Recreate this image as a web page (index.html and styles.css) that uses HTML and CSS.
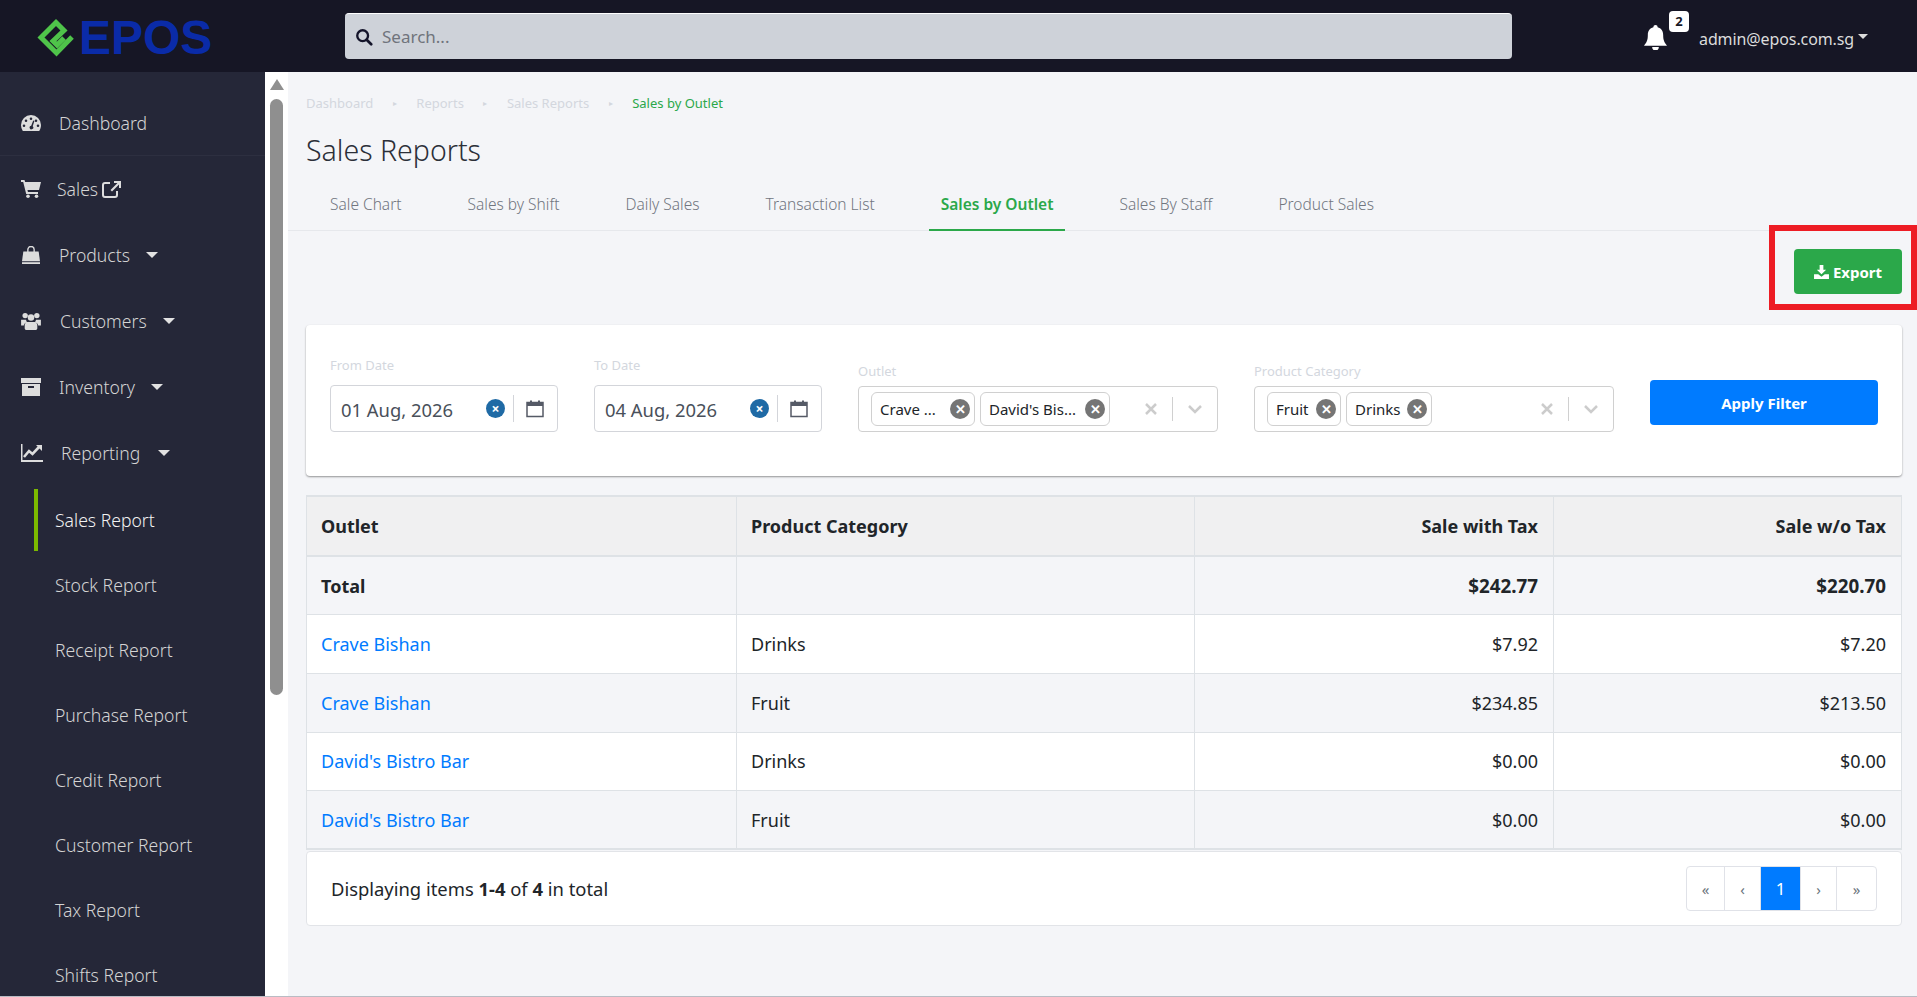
FILE: index.html
```html
<!DOCTYPE html>
<html lang="en">
<head>
    <meta charset="UTF-8">
    <meta name="viewport" content="width=device-width, initial-scale=1.0">
    <title>Sales by Outlet</title>
    <link rel="stylesheet" href="styles.css">
</head>
<body>
    <header class="topbar">
        <div class="logo">
            <svg class="logo-mark" viewBox="0 0 39 39"><path d="M35 19 L19.500 35 L4 19.500 L19 4.500 L27 12.500 L16 23 L20 27 L27 20" fill="none" stroke="#4fc44a" stroke-width="5"/></svg>
            <span class="logo-text">EPOS</span>
        </div>
        <div class="search">
            <svg class="search-icon" viewBox="0 0 20 20"><circle cx="8.500" cy="8.500" r="6" fill="none" stroke="#14142a" stroke-width="2.600"/><path d="M13 13l5 5" stroke="#14142a" stroke-width="3" stroke-linecap="round"/></svg>
            <span>Search...</span>
        </div>
        <div class="user-area">
            <svg class="bell" viewBox="0 0 24 26"><path d="M12 0a2.200 2.200 0 0 1 2.200 2.400C18 3.400 20 6.500 20 10.500c0 6 1.500 8 4 11H0c2.500-3 4-5 4-11C4 6.500 6 3.400 9.800 2.400A2.200 2.200 0 0 1 12 0zM8.500 23h7a3.500 3.500 0 0 1-7 0z" fill="#fff"/></svg>
            <span class="badge">2</span>
            <span class="user-name">admin@epos.com.sg</span>
            <span class="user-caret"></span>
        </div>
    </header>

    <div class="layout">
        <nav class="sidebar">
            <a class="nav-item nav-first">
                <svg class="nav-icon" viewBox="0 0 20 16"><path fill-rule="evenodd" d="M10 0a10 10 0 0 1 10 10c0 2.300-.7 4.300-1.800 6H1.800A10.500 10.500 0 0 1 0 10 10 10 0 0 1 10 0zM10 2.500a1.300 1.300 0 1 0 0 2.600 1.300 1.300 0 0 0 0-2.600zM5 4.500a1.300 1.300 0 1 0 0 2.600 1.300 1.300 0 0 0 0-2.600zM15 4.500a1.300 1.300 0 1 0 0 2.600 1.300 1.300 0 0 0 0-2.600zM3 9.500a1.300 1.300 0 1 0 0 2.600 1.300 1.300 0 0 0 0-2.600zM17 9.500a1.300 1.300 0 1 0 0 2.600 1.300 1.300 0 0 0 0-2.600zM12.200 5.500l-2 5.300a1.800 1.800 0 1 0 1.500.5l1.700-5.400z"/></svg>
                <span>Dashboard</span>
            </a>
            <a class="nav-item nav-tight">
                <svg class="nav-icon" viewBox="0 0 20 18"><path d="M0 0h3.500l.6 2H20l-2 8H6.500l.4 2H17v2H5.200L2.200 2H0z"/><circle cx="7" cy="16.200" r="1.800"/><circle cx="15.500" cy="16.200" r="1.800"/></svg>
                <span>Sales</span>
                <svg class="ext-icon" viewBox="0 0 20 18"><path d="M12 1h7v7h-2V4.500l-7 7L8.500 10l7-7H12z" fill="#ddd"/><path d="M8 3H3a2 2 0 0 0-2 2v10a2 2 0 0 0 2 2h10a2 2 0 0 0 2-2v-4" fill="none" stroke="#ddd" stroke-width="2"/></svg>
            </a>
            <a class="nav-item">
                <svg class="nav-icon" viewBox="0 0 20 20"><path d="M6.500 7V4a3.500 3.500 0 0 1 7 0v3" fill="none" stroke="#ddd" stroke-width="1.500"/><path d="M1.500 6h17l1.500 11H0z"/><path d="M0 18h20v2H0z"/></svg>
                <span>Products</span>
                <span class="caret"></span>
            </a>
            <a class="nav-item nav-wide">
                <svg class="nav-icon" viewBox="0 0 22 20"><circle cx="4.500" cy="4" r="3"/><circle cx="17.500" cy="4" r="3"/><circle cx="11" cy="6" r="3.600"/><path d="M0 8.500h5.500a5 5 0 0 0 1 2.500C4 12 3 14 3 15H0zM22 8.500h-5.500a5 5 0 0 1-1 2.500c2.500 1 3.500 3 3.500 4h3zM7 11h8c2 0 3 2 3 4v3c0 1-1 2-2 2H6c-1 0-2-1-2-2v-3c0-2 1-4 3-4z"/></svg>
                <span>Customers</span>
                <span class="caret"></span>
            </a>
            <a class="nav-item">
                <svg class="nav-icon" viewBox="0 0 20 18"><path fill-rule="evenodd" d="M0 0h20v5H0zM1 6h18v12H1zM7 8v2h6V8z"/></svg>
                <span>Inventory</span>
                <span class="caret"></span>
            </a>
            <a class="nav-item nav-wider">
                <svg class="nav-icon" viewBox="0 0 22 18"><path d="M0 0h1.500v16H22v2H0z"/><path d="M3 13l5-6 3.500 3L19 2" fill="none" stroke="#ddd" stroke-width="2.600"/><path d="M15 1h6v6z"/></svg>
                <span>Reporting</span>
                <span class="caret"></span>
            </a>
            <a class="sub-item sub-active">Sales Report</a>
            <a class="sub-item">Stock Report</a>
            <a class="sub-item">Receipt Report</a>
            <a class="sub-item">Purchase Report</a>
            <a class="sub-item">Credit Report</a>
            <a class="sub-item">Customer Report</a>
            <a class="sub-item">Tax Report</a>
            <a class="sub-item">Shifts Report</a>
        </nav>

        <div class="scroll-track">
            <div class="scroll-arrow"></div>
            <div class="scroll-thumb"></div>
        </div>

        <main class="content">
            <div class="breadcrumb">
                <span>Dashboard</span><i>▸</i>
                <span>Reports</span><i>▸</i>
                <span>Sales Reports</span><i>▸</i>
                <span class="crumb-current">Sales by Outlet</span>
            </div>
            <h1>Sales Reports</h1>
            <div class="tabs">
                <a class="tab">Sale Chart</a>
                <a class="tab">Sales by Shift</a>
                <a class="tab">Daily Sales</a>
                <a class="tab">Transaction List</a>
                <a class="tab tab-active">Sales by Outlet</a>
                <a class="tab">Sales By Staff</a>
                <a class="tab">Product Sales</a>
            </div>

            <div class="page-body">
                <div class="actions">
                    <button class="btn-export">
                        <svg viewBox="0 0 16 15"><path d="M6 0h4v5h3L8 10 3 5h3z" fill="#fff"/><path d="M0 10h4.500L8 12.500 11.500 10H16v5H0z" fill="#fff"/></svg>
                        Export
                    </button>
                </div>

                <section class="filter-card">
                    <div class="field field-date">
                        <label>From Date</label>
                        <div class="date-input">
                            <span class="date-value">01 Aug, 2026</span>
                            <span class="date-clear">×</span>
                            <span class="sep"></span>
                            <svg class="cal" viewBox="0 0 18 18"><path d="M1 3h16v14H1z" fill="#fff" stroke="#555a66" stroke-width="1.500"/><path d="M1 3h16v3.500H1z" fill="#555a66"/><path d="M5 1v4M13 1v4" stroke="#555a66" stroke-width="2"/></svg>
                        </div>
                    </div>
                    <div class="field field-date">
                        <label>To Date</label>
                        <div class="date-input">
                            <span class="date-value">04 Aug, 2026</span>
                            <span class="date-clear">×</span>
                            <span class="sep"></span>
                            <svg class="cal" viewBox="0 0 18 18"><path d="M1 3h16v14H1z" fill="#fff" stroke="#555a66" stroke-width="1.500"/><path d="M1 3h16v3.500H1z" fill="#555a66"/><path d="M5 1v4M13 1v4" stroke="#555a66" stroke-width="2"/></svg>
                        </div>
                    </div>
                    <div class="field field-select">
                        <label>Outlet</label>
                        <div class="multi-select">
                            <span class="chip chip-crave">Crave ...<b class="chip-x">✕</b></span>
                            <span class="chip chip-david">David's Bis...<b class="chip-x">✕</b></span>
                            <svg class="select-clear" viewBox="0 0 12 12"><path d="M1 1l10 10M11 1L1 11" stroke="#ccc" stroke-width="2.500"/></svg>
                            <span class="sep sep-select"></span>
                            <svg class="select-arrow" viewBox="0 0 14 9"><path d="M1 1l6 6 6-6" fill="none" stroke="#ccc" stroke-width="2.500"/></svg>
                        </div>
                    </div>
                    <div class="field field-select">
                        <label>Product Category</label>
                        <div class="multi-select">
                            <span class="chip chip-fruit">Fruit<b class="chip-x">✕</b></span>
                            <span class="chip chip-drinks">Drinks<b class="chip-x">✕</b></span>
                            <svg class="select-clear" viewBox="0 0 12 12"><path d="M1 1l10 10M11 1L1 11" stroke="#ccc" stroke-width="2.500"/></svg>
                            <span class="sep sep-select"></span>
                            <svg class="select-arrow" viewBox="0 0 14 9"><path d="M1 1l6 6 6-6" fill="none" stroke="#ccc" stroke-width="2.500"/></svg>
                        </div>
                    </div>
                    <button class="btn-apply">Apply Filter</button>
                </section>

                <table class="report">
                    <colgroup>
                        <col class="col-outlet"><col class="col-cat"><col class="col-tax"><col class="col-notax">
                    </colgroup>
                    <thead>
                        <tr><th>Outlet</th><th>Product Category</th><th class="num">Sale with Tax</th><th class="num">Sale w/o Tax</th></tr>
                    </thead>
                    <tbody>
                        <tr class="row-total"><td>Total</td><td></td><td class="num">$242.77</td><td class="num">$220.70</td></tr>
                        <tr class="row-odd"><td><a>Crave Bishan</a></td><td>Drinks</td><td class="num">$7.92</td><td class="num">$7.20</td></tr>
                        <tr><td><a>Crave Bishan</a></td><td>Fruit</td><td class="num">$234.85</td><td class="num">$213.50</td></tr>
                        <tr class="row-odd"><td><a>David's Bistro Bar</a></td><td>Drinks</td><td class="num">$0.00</td><td class="num">$0.00</td></tr>
                        <tr><td><a>David's Bistro Bar</a></td><td>Fruit</td><td class="num">$0.00</td><td class="num">$0.00</td></tr>
                    </tbody>
                </table>

                <div class="table-footer">
                    <span>Displaying items <b>1-4</b> of <b>4</b> in total</span>
                    <div class="pager">
                        <a class="page-first">«</a>
                        <a class="page-prev">‹</a>
                        <a class="page-current">1</a>
                        <a class="page-next">›</a>
                        <a class="page-last">»</a>
                    </div>
                </div>
            </div>
        </main>
    </div>

    <div class="annotation"></div>
</body>
</html>
```

FILE: styles.css
```css
* {
    box-sizing: border-box;
}
html, body {
    height: 997px;
    margin: 0;
    overflow: hidden;
}
body {
    position: relative;
    font-family: "Noto Sans", "Open Sans", sans-serif;
    color: #212529;
    background-color: #f4f5f8;
    border-bottom: 1px solid #b9bcc4;
}
a {
    text-decoration: none;
}

/* top bar */
.topbar {
    display: flex;
    align-items: center;
    height: 72px;
    background-color: #161625;
}
.logo {
    display: flex;
    align-items: center;
    width: 345px;
    padding: 3px 0 0 37px;
}
.logo-mark {
    width: 39px;
    height: 39px;
}
.logo-text {
    margin-left: 3px;
    font-family: "Liberation Sans", sans-serif;
    font-size: 48px;
    line-height: 48px;
    font-weight: 700;
    color: #0a2ba8;
}
.search {
    display: flex;
    align-items: center;
    width: 1167px;
    height: 46px;
    padding-left: 10px;
    background-color: #ced2d9;
    border-top: 1px solid #fff;
    border-radius: 4px;
    font-size: 17px;
    color: #70747c;
}
.search-icon {
    width: 18px;
    height: 18px;
    margin-right: 9px;
}
.user-area {
    display: flex;
    align-items: center;
    position: relative;
    flex: 1;
    padding-left: 132px;
    color: #dcdcdc;
}
.bell {
    width: 23px;
    height: 25px;
    margin-top: 2px;
}
.badge {
    position: absolute;
    left: 157px;
    top: -11px;
    width: 20px;
    height: 21px;
    background: #fff;
    border-radius: 4px;
    color: #161625;
    font-size: 13px;
    font-weight: 700;
    line-height: 21px;
    text-align: center;
}
.user-name {
    margin-left: 32px;
    margin-top: 6px;
    font-size: 16px;
    letter-spacing: -0.1px;
}
.user-caret {
    width: 0;
    height: 0;
    margin-left: 4px;
    border-left: 5px solid transparent;
    border-right: 5px solid transparent;
    border-top: 5px solid #dcdcdc;
}

.layout {
    display: flex;
    height: 925px;
}

/* side menu */
.sidebar {
    flex: none;
    width: 265px;
    padding-top: 19px;
    background-color: #252738;
    color: #d4d4d4;
    font-size: 17.600px;
    font-weight: 300;
}
.nav-item {
    display: flex;
    align-items: center;
    height: 66px;
    padding-left: 21px;
}
.nav-first {
    height: 65px;
    border-bottom: 1px solid #2d2f40;
}
.nav-icon {
    flex: none;
    width: 20px;
    height: 18px;
    margin-right: 18px;
    fill: #ddd;
}
.nav-tight .nav-icon {
    margin-right: 16px;
}
.nav-wide .nav-icon {
    margin-right: 19px;
}
.nav-wider .nav-icon {
    width: 22px;
    margin-right: 18px;
}
.nav-wider .caret {
    margin-left: 18px;
}
.ext-icon {
    width: 20px;
    height: 18px;
    margin-left: 4px;
}
.caret {
    width: 0;
    height: 0;
    margin-left: 16px;
    border-left: 6px solid transparent;
    border-right: 6px solid transparent;
    border-top: 6px solid #e2e2e2;
}
.sub-item {
    display: flex;
    align-items: center;
    height: 65px;
    margin-left: 34px;
    padding-left: 17px;
    border-left: 4px solid transparent;
}
.sub-active {
    height: 62px;
    margin-top: 3px;
    margin-bottom: 1px;
    border-left-color: #7cb900;
    color: #f2f2f2;
}

/* fake scrollbar */
.scroll-track {
    flex: none;
    width: 23px;
    padding: 7px 5px 0;
    background: #fff;
}
.scroll-arrow {
    width: 0;
    height: 0;
    margin-bottom: 9px;
    border-left: 7px solid transparent;
    border-right: 7px solid transparent;
    border-bottom: 11px solid #8f8f8f;
}
.scroll-thumb {
    width: 13px;
    height: 596px;
    background: #8f8f8f;
    border-radius: 7px;
}

/* page content */
.content {
    flex: 1;
    min-width: 0;
}
.breadcrumb {
    display: flex;
    align-items: center;
    padding: 22px 0 0 18px;
    font-size: 13px;
    line-height: 18px;
    color: #d3d7de;
}
.breadcrumb i {
    margin: 0 19.500px;
    font-size: 8px;
    font-style: normal;
}
.crumb-current {
    color: #2ba84a;
}
h1 {
    margin: 18px 0 0 18px;
    font-size: 28.500px;
    line-height: 40px;
    font-weight: 300;
    color: #2b2f38;
}
.tabs {
    display: flex;
    gap: 42px;
    height: 52px;
    margin-top: 9px;
    padding-left: 30px;
    border-bottom: 1px solid #e6e8ec;
}
.tab {
    height: 52px;
    padding: 13px 12px 0;
    font-size: 15.500px;
    font-weight: 300;
    line-height: 24px;
    color: #71767f;
}
.tab-active {
    border-bottom: 2px solid #2ba84a;
    color: #2ba84a;
    font-weight: 600;
}
.page-body {
    padding: 18px 15px 0 18px;
}
.actions {
    display: flex;
    justify-content: flex-end;
}
.btn-export {
    display: flex;
    align-items: center;
    justify-content: center;
    width: 108px;
    height: 45px;
    border: none;
    border-radius: 4px;
    background-color: #2ba84a;
    color: #fff;
    font-family: inherit;
    font-size: 15px;
    font-weight: 700;
}
.btn-export svg {
    width: 15px;
    height: 14px;
    margin-right: 4px;
}

/* filter card */
.filter-card {
    display: flex;
    align-items: flex-end;
    height: 151px;
    margin-top: 31px;
    padding: 0 24px 44px;
    background: #fff;
    border-radius: 4px;
    box-shadow: 0 1px 2px rgba(0, 0, 0, 0.4);
}
.field {
    flex: none;
    margin-right: 36px;
}
.field label {
    display: block;
    font-size: 13px;
    line-height: 20px;
    color: #d3d7de;
}
.field-date {
    width: 228px;
}
.field-date label {
    margin-bottom: 10px;
}
.field-select {
    width: 360px;
}
.field-select label {
    margin-bottom: 5px;
}
.date-input {
    display: flex;
    align-items: center;
    height: 47px;
    padding: 0 13px 0 10px;
    border: 1px solid #d3d5da;
    border-radius: 4px;
    font-size: 18.400px;
    color: #49505a;
}
.date-value {
    flex: 1;
    margin-top: 2px;
}
.date-clear {
    width: 19px;
    height: 19px;
    background-color: #1f6aa5;
    border-radius: 50%;
    color: #fff;
    font-size: 14px;
    font-weight: 700;
    line-height: 19px;
    text-align: center;
}
.sep {
    width: 1px;
    height: 27px;
    margin: 0 12px 0 8px;
    background-color: #d3d5da;
}
.cal {
    width: 18px;
    height: 19px;
}
.multi-select {
    display: flex;
    align-items: center;
    height: 46px;
    padding: 0 15px 0 12px;
    border: 1px solid #d0d0d0;
    border-radius: 4px;
}
.chip {
    display: flex;
    align-items: center;
    justify-content: space-between;
    height: 34px;
    margin-right: 5px;
    padding: 0 4px 0 8px;
    border: 1px solid #d0d0d0;
    border-radius: 6px;
    font-size: 15px;
    white-space: nowrap;
}
.chip-crave {
    width: 104px;
}
.chip-david {
    width: 130px;
}
.chip-fruit {
    width: 74px;
}
.chip-drinks {
    width: 86px;
}
.chip-x {
    width: 20px;
    height: 20px;
    background-color: #757575;
    border-radius: 50%;
    color: #fff;
    font-size: 13px;
    line-height: 20px;
    text-align: center;
}
.select-clear {
    width: 12px;
    height: 12px;
    margin-left: auto;
}
.sep-select {
    height: 24px;
    margin: 0 15px 0 15px;
    background-color: #d0d0d0;
}
.select-arrow {
    width: 14px;
    height: 9px;
}
.btn-apply {
    flex: none;
    width: 228px;
    height: 45px;
    margin: 0 0 7px 0;
    border: none;
    border-radius: 4px;
    background-color: #007bff;
    color: #fff;
    font-family: inherit;
    font-size: 15px;
    font-weight: 700;
}

/* report table */
.report {
    width: 100%;
    margin-top: 19px;
    table-layout: fixed;
    border-collapse: collapse;
    border: 1px solid #dee2e6;
    font-size: 18px;
}
.col-outlet {
    width: 430px;
}
.col-cat {
    width: 458px;
}
.col-tax {
    width: 359px;
}
.report th, .report td {
    height: 58.700px;
    padding: 0 15px 0 14px;
    border: 1px solid #dee2e6;
    text-align: left;
}
.report thead th {
    height: 60px;
    border-top-width: 2px;
    border-bottom-width: 2px;
    background-color: #f0f0f1;
}
.report .num {
    text-align: right;
}
.row-total td {
    font-weight: 700;
}
.row-total .num {
    font-size: 18.800px;
}
.row-total, .report tbody tr:nth-child(3), .report tbody tr:nth-child(5) {
    background-color: #f4f5f8;
}
.row-odd {
    background-color: #fff;
}
.report a {
    color: #007bff;
}
.report tbody tr:last-child td {
    border-bottom-width: 2px;
}
.table-footer {
    display: flex;
    align-items: center;
    justify-content: space-between;
    height: 75px;
    margin-top: 1px;
    padding: 0 24px 0 24px;
    background: #fff;
    border: 1px solid #e2e4e8;
    border-radius: 4px;
    font-size: 18.400px;
}
.pager {
    display: flex;
    height: 45px;
    border: 1px solid #e0e2e8;
    border-radius: 4px;
    font-size: 15px;
    color: #6c757d;
}
.pager a {
    display: flex;
    align-items: center;
    justify-content: center;
    border-right: 1px solid #e0e2e8;
}
.pager a:last-child {
    border-right: none;
}
.page-first {
    width: 38px;
}
.page-last {
    width: 39px;
}
.page-prev, .page-next {
    width: 36px;
}
.pager .page-current {
    width: 40px;
    background-color: #007bff;
    color: #fff;
    font-size: 17px;
}

/* red highlight drawn over the screenshot */
.annotation {
    position: absolute;
    left: 1769px;
    top: 225px;
    width: 148px;
    height: 85px;
    border: 6px solid #ed1c24;
}
```
